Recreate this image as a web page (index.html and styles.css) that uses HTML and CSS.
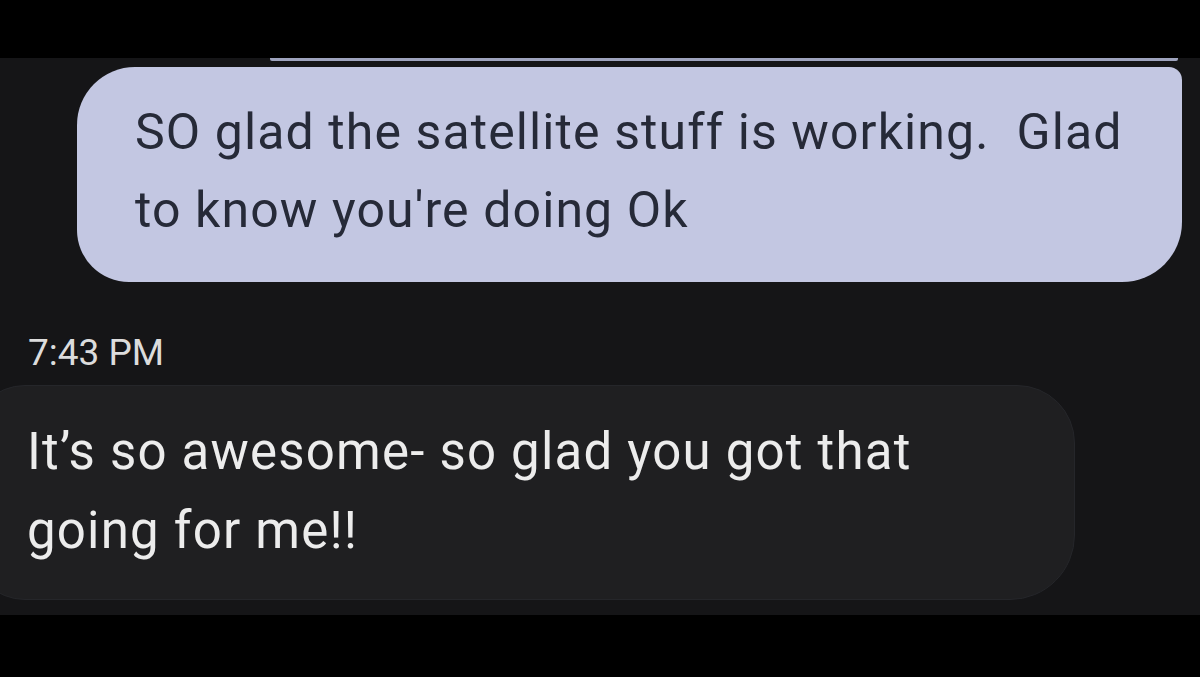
FILE: index.html
```html
<!DOCTYPE html>
<html lang="en">
<head>
<meta charset="utf-8">
<title>Messages</title>
<link rel="stylesheet" href="styles.css">
</head>
<body>
<div class="frame">
  <div class="bar bar-top"></div>
  <main class="chat">
    <div class="prev-edge"></div>
    <div class="row row-out">
      <div class="bubble bubble-out">SO glad the satellite stuff is working.&nbsp; Glad to know you're doing Ok</div>
    </div>
    <div class="stamp">7:43 PM</div>
    <div class="row row-in">
      <div class="bubble bubble-in">It’s so awesome- so glad you got that going for me!!</div>
    </div>
  </main>
  <div class="bar bar-bottom"></div>
</div>
</body>
</html>
```

FILE: styles.css
```css
html, body {
  margin: 0;
  padding: 0;
  background: #000;
}
.frame {
  width: 1200px;
  height: 677px;
  display: flex;
  flex-direction: column;
  overflow: hidden;
  font-family: Roboto, "Open Sans", sans-serif;
}
.bar-top { height: 58px; background: #000; flex: none; }
.bar-bottom { flex: 1; background: #000; }
.chat {
  height: 557px;
  flex: none;
  background: #151517;
  display: flex;
  flex-direction: column;
  overflow: hidden;
}
.prev-edge {
  height: 3px;
  margin-left: 270px;
  width: 908px;
  background: #9ea3bd;
  border-radius: 0 0 2px 2px;
  flex: none;
}
.row { display: flex; }
.row-out { justify-content: flex-end; padding: 6px 18px 0 77px; }
.bubble-out {
  flex: 1;
  height: 215px;
  box-sizing: border-box;
  background: #c3c7e2;
  color: #262a38;
  border-radius: 58px 13px 60px 52px;
  padding: 26px 40px 0 58px;
  font-size: 50px;
  line-height: 78px;
  letter-spacing: 1.1px;
}
.stamp {
  color: #dcdcdc;
  font-size: 37px;
  line-height: 44px;
  padding: 49px 0 0 28px;
  height: 54px;
  flex: none;
}
.row-in { margin-left: -30px; }
.bubble-in {
  width: 1105px;
  height: 215px;
  box-sizing: border-box;
  background: #1f1f21;
  border: 1px solid #25262a;
  color: #ececec;
  border-radius: 55px 58px 65px 55px;
  padding: 26px 150px 0 56px;
  font-size: 51px;
  line-height: 79px;
  letter-spacing: 1.2px;
}
```
